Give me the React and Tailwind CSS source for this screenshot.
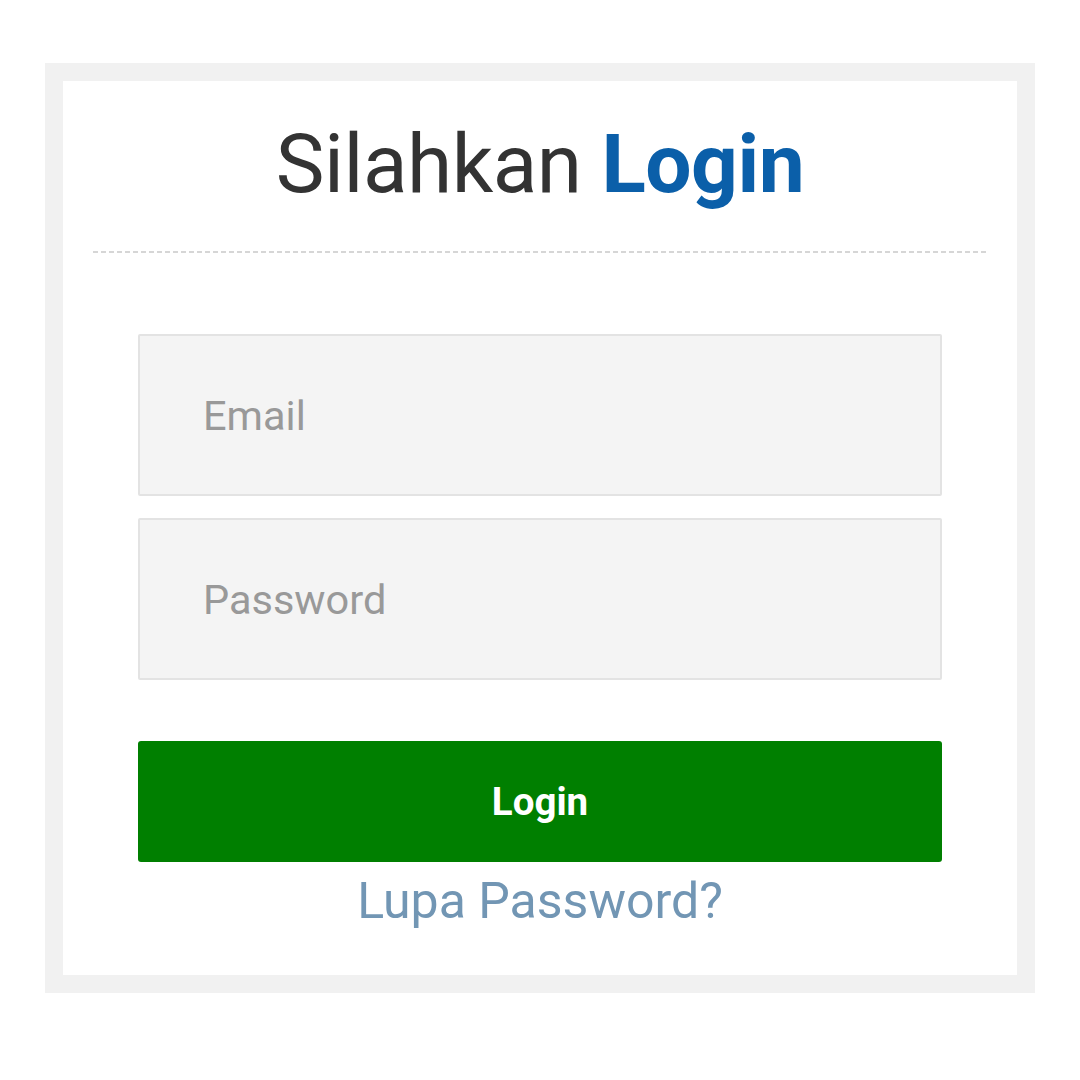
import React from 'react';

const App = () => {
  return (
    <div className="min-h-[1080px] w-[1080px] bg-white pt-[63px] pl-[45px] font-['Roboto',sans-serif]">
      <div className="w-[990px] border-[18px] border-[#f1f1f1] bg-white px-[30px] pt-[33px] pb-[46px]">
        {/* Header */}
        <h1 className="text-center text-[82px] leading-[100px] tracking-[-0.5px] text-[#333333]">
          Silahkan <span className="font-bold text-[#0b5fa9]">Login</span>
        </h1>
        <div className="mt-[37px] h-[2px] bg-[repeating-linear-gradient(90deg,#d6d6d6_0_5px,transparent_5px_8px)]" />

        {/* Form */}
        <form className="mx-[45px] mt-[81px]" onSubmit={e => e.preventDefault()}>
          <div className="flex flex-col gap-[22px]">
            <input
              type="email"
              placeholder="Email"
              className="h-[162px] w-full rounded-[2px] border-2 border-[#e3e3e3] bg-[#f4f4f4] px-[63px] text-[41.5px] text-[#333] placeholder:text-[#999999] outline-none"
            />
            <input
              type="password"
              placeholder="Password"
              className="h-[162px] w-full rounded-[2px] border-2 border-[#e3e3e3] bg-[#f4f4f4] px-[63px] text-[41.5px] text-[#333] placeholder:text-[#999999] outline-none"
            />
          </div>
          <button
            type="submit"
            className="mt-[61px] flex h-[121px] w-full items-center justify-center rounded-[3px] bg-[#007f00] text-[38.5px] font-bold text-white"
          >
            Login
          </button>
          <div className="mt-[11px] text-center text-[50px] leading-[56px]">
            <a href="#" className="text-[#7296b4]">Lupa Password?</a>
          </div>
        </form>
      </div>
    </div>
  );
};

export default App;
